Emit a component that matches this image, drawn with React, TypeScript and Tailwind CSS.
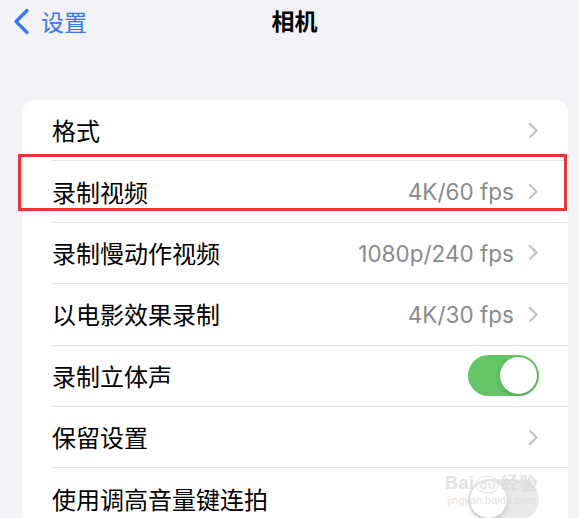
import React from 'react';

type Row = {
  label: string;
  value?: string;
  toggle?: boolean;
  chevron?: boolean;
};

const rows: Row[] = [
  { label: '格式', chevron: true },
  { label: '录制视频', value: '4K/60 fps', chevron: true },
  { label: '录制慢动作视频', value: '1080p/240 fps', chevron: true },
  { label: '以电影效果录制', value: '4K/30 fps', chevron: true },
  { label: '录制立体声', toggle: true },
  { label: '保留设置', chevron: true },
  { label: '使用调高音量键连拍', toggle: false },
];

const cjk = '"Noto Sans CJK SC", "Noto Sans", sans-serif';

function Chevron() {
  return (
    <svg width="11" height="17" viewBox="0 0 11 17" fill="none" className="shrink-0">
      <path d="M2 2l6.5 6.5L2 15" stroke="#c4c4c7" strokeWidth="2.4" strokeLinecap="round" strokeLinejoin="round" />
    </svg>
  );
}

function Toggle({ on }: { on: boolean }) {
  return (
    <div
      className={`w-[71px] h-[41px] rounded-full p-[2px] flex ${on ? 'bg-[#65c466] justify-end' : 'bg-[#e9e9eb] justify-start'}`}
    >
      <div className="w-[37px] h-[37px] rounded-full bg-white shadow-[0_2px_5px_rgba(0,0,0,0.18)]" />
    </div>
  );
}

export default function App() {
  return (
    <div className="relative h-[518px] w-[579px] overflow-hidden bg-[#f2f2f7]" style={{ fontFamily: cjk }}>
      {/* Nav bar */}
      <div className="relative h-[42px] flex items-center">
        <div className="flex items-center pl-[13px] gap-[11px] text-[#3478f6]">
          <svg width="17" height="27" viewBox="0 0 17 27" fill="none">
            <path d="M14 2.5L3 13.5l11 11" stroke="#3478f6" strokeWidth="3.2" strokeLinecap="round" strokeLinejoin="round" />
          </svg>
          <span className="text-[23px] leading-none">设置</span>
        </div>
        <div className="absolute left-0 right-0 top-[9px] text-center text-[23px] font-bold leading-none text-black pl-[10px]">
          相机
        </div>
      </div>

      {/* Card */}
      <div className="mt-[58px] ml-[23px] w-[545px] rounded-[12px] bg-white">
        {rows.map((row, i) => (
          <div key={row.label} className="pl-[29px]">
            <div
              className={`h-[61.4px] flex items-center pr-[29px] ${i < rows.length - 1 ? 'border-b border-[#e3e3e6]' : ''}`}
            >
              <span className="flex-1 text-[24px] leading-none text-black">{row.label}</span>
              {row.value && (
                <span
                  className="mr-[14px] mt-[2px] text-[22.5px] leading-none text-[#8a8a8e]"
                  style={{ fontFamily: 'Inter, "Noto Sans", sans-serif' }}
                >
                  {row.value}
                </span>
              )}
              {row.chevron && <Chevron />}
              {row.toggle !== undefined && <Toggle on={row.toggle} />}
            </div>
          </div>
        ))}
      </div>

      {/* Red highlight annotation */}
      <div className="absolute left-[18px] top-[154px] w-[549px] h-[57px] border-[3px] border-[#ee3437]" />

      {/* Watermark */}
      <div className="absolute left-[445px] top-[474px] flex flex-col items-center leading-none text-[#dcdcdc] opacity-80">
        <span className="text-[18px] font-bold tracking-wide" style={{ fontFamily: '"Liberation Sans", sans-serif' }}>
          Bai<span className="mx-[2px] rounded-full border border-[#dcdcdc] px-[2px] text-[13px]">du</span>经验
        </span>
        <span className="mt-[3px] text-[11px]" style={{ fontFamily: '"Liberation Sans", sans-serif' }}>
          jingyan.baidu.com
        </span>
      </div>
    </div>
  );
}
